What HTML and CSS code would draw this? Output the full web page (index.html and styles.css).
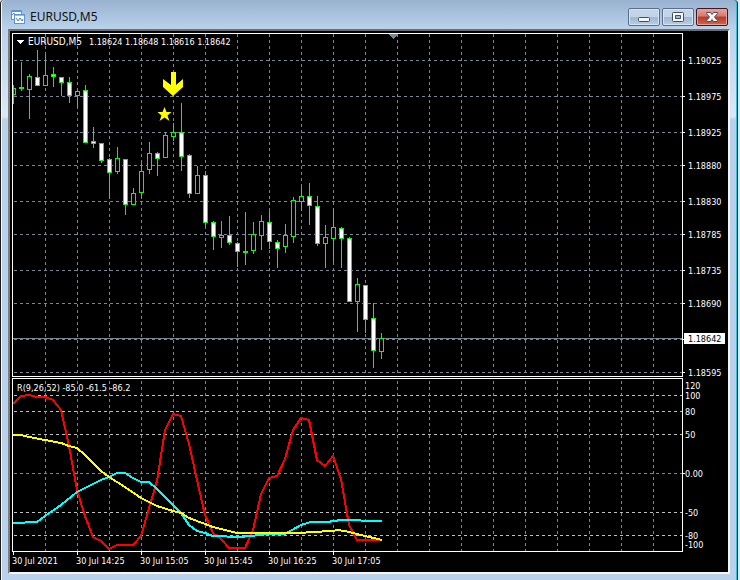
FILE: index.html
```html
<!DOCTYPE html>
<html lang="en">
<head>
<meta charset="utf-8">
<title>EURUSD,M5</title>
<link rel="stylesheet" href="styles.css">
</head>
<body>
<main class="window">
  <header class="titlebar">
    <svg class="app-icon" width="14" height="14" viewBox="0 0 14 14" aria-hidden="true">
      <path d="M.5 .5h10v9H.5z" fill="#fff" stroke="#5b92dc"/>
      <path d="M1 1h9v1H1z" fill="#5b92dc"/>
      <path d="M1 5l2-2 1 3" fill="none" stroke="#3f7fd6"/>
      <rect x="3.500" y="4.500" width="10" height="9" fill="#fff" stroke="#5b92dc"/>
      <path d="M4 5h9v1H4z" fill="#8db6ea"/>
      <path d="M5 8l2 3 2-3 2 3 1-2" fill="none" stroke="#3f7fd6"/>
    </svg>
    <h1 class="title">EURUSD,M5</h1>
    <div class="controls">
      <button class="control" type="button" aria-label="Minimize">
        <svg width="12" height="12" viewBox="0 0 12 12"><rect x=".5" y="6.500" width="11" height="4" rx="1" fill="#f6f6f6" stroke="#454c5c"/></svg>
      </button>
      <button class="control" type="button" aria-label="Maximize">
        <svg width="12" height="12" viewBox="0 0 12 12"><rect x=".5" y="1.500" width="11" height="9" rx="1" fill="#f6f6f6" stroke="#454c5c"/><path d="M3.500 4.500h5v3h-5z" fill="#9db9d8" stroke="#454c5c"/></svg>
      </button>
      <button class="control close" type="button" aria-label="Close">
        <svg width="12" height="12" viewBox="0 0 12 12"><path d="M.5 1.500h4L6 3.500l1.500-2h4v1L8.500 6l3 3.500v1h-4L6 8.500l-1.500 2h-4v-1l3-3.500-3-3.500z" fill="#f6f6f6" stroke="#454c5c"/></svg>
      </button>
    </div>
  </header>
  <section class="client">
    <svg class="chart" id="chart" role="img" aria-label="EURUSD five minute candles with R indicator"></svg>
  </section>
</main>
<script src="chart.js"></script>
</body>
</html>
```
FILE: styles.css
```css
* { box-sizing: border-box; }
body {
  margin: 0;
  padding-right: 2px;
  background: #e6e6e6;
  font-family: "Noto Sans", "Open Sans", sans-serif;
}
.window {
  min-height: 100vh;
  padding: 0 7px 6px 7px;
  border-left: 1px solid #1d1d1d;
  border-right: 1px solid #1d1d1d;
  border-radius: 4px 4px 0 0;
  background: linear-gradient(#98b2d0, #b9d1ea 28px, #dbe7f5 116px, #b9d1ea 120px);
  box-shadow: inset 1px 0 #f4f8fc, inset -1px 0 #27c4e8;
  display: flex;
  flex-direction: column;
}
.titlebar {
  display: flex;
  align-items: center;
  gap: 5px;
  height: 29px;
  padding: 5px 2px 0 3px;
}
.title {
  margin: 0;
  flex: 1;
  font-size: 12px;
  font-weight: 400;
  line-height: 16px;
  color: #111;
}
.controls { display: flex; gap: 2px; }
.control {
  display: grid;
  place-items: center;
  width: 32px;
  height: 18px;
  padding: 0;
  border: 1px solid #5b6f8b;
  border-radius: 2px;
  background: linear-gradient(#c3d4e7 48%, #9fb7d2 52%, #b9cee6);
  box-shadow: inset 0 0 0 1px #d6e3f1;
}
.control.close {
  border-color: #431422;
  background: linear-gradient(#e8a598, #d6786a 45%, #b8392a 50%, #cc6a4e);
  box-shadow: inset 0 0 0 1px #e0a59a;
}
.client {
  flex: 1;
  border: 2px solid;
  border-color: #6d6d6d #f4f4f4 #f4f4f4 #7d7d7d;
  background: #000;
}
.chart {
  display: block;
  width: 100%;
  height: 541px;
  shape-rendering: crispEdges;
}
.grid { stroke: #778899; stroke-dasharray: 3 3; }
.level { stroke: #c0c0c0; stroke-dasharray: 3 3; }
.frame { fill: none; stroke: #fff; }
.tick { stroke: #fff; }
.price-line { stroke: #778899; }
.wick { fill: #0f0; }
.body { stroke: #0f0; }
.up { fill: #000; }
.down { fill: #fff; }
.line { fill: none; stroke-width: 2; }
.red { stroke: #f00; }
.cyan { stroke: #0ff; }
.yellow { stroke: #ff0; }
.signal { fill: #ff0; shape-rendering: auto; }
.marker { fill: #778899; }
.white { fill: #fff; }
.label {
  fill: #fff;
  font-family: "DejaVu Sans Condensed", "DejaVu Sans", sans-serif;
  font-size: 9px;
}
.symbol { font-size: 10px; }
.current { fill: #000; }
```
FILE: chart.js
```js
const svg = document.getElementById('chart');

// Candle rows: high, body top, body bottom, low, direction (1 = up, 0 = down)
const candles = [
  [85,88,94,103,1],[62,87,88,90,1],[74,76,89,118,1],[50,77,85,85,0],[55,75,85,85,1],
  [67,74,76,86,0],[77,77,82,95,0],[77,82,95,102,0],[90,91,95,106,1],[85,90,142,142,0],
  [127,141,143,147,0],[143,143,160,162,0],[158,159,172,198,0],[147,158,171,173,1],
  [159,159,204,214,0],[188,193,204,204,1],[163,171,192,197,1],[142,153,169,173,1],
  [152,153,158,175,0],[132,135,157,157,1],[123,132,136,140,1],[103,132,156,170,0],
  [154,155,193,197,0],[166,175,193,193,1],[171,175,222,226,0],[221,222,236,249,0],
  [221,235,237,247,1],[216,235,242,244,0],[242,243,251,266,0],[212,251,252,264,1],
  [222,234,250,253,1],[215,221,235,249,1],[211,222,241,248,0],[240,242,248,267,0],
  [224,235,246,252,1],[197,200,236,242,1],[187,196,201,210,1],[183,196,205,224,0],
  [196,206,243,245,0],[225,237,243,267,1],[208,227,238,261,1],[227,228,238,267,0],
  [237,238,301,301,0],[278,284,301,331,1],[285,285,319,332,0],[303,318,350,367,0],
  [333,338,351,358,1]
];
const prices = [[60,'1.19025'],[96,'1.18975'],[132,'1.18925'],[165,'1.18880'],[201,'1.18830'],
  [234,'1.18785'],[270,'1.18735'],[303,'1.18690'],[339,''],[372,'1.18595']];
const levels = [[395,'100'],[411,'80'],[434,'50'],[473,'0.00'],[512,'-50'],[535,'-80']];
const times = ['30 Jul 2021','30 Jul 14:25','30 Jul 15:05','30 Jul 15:45','30 Jul 16:25','30 Jul 17:05'];
const lines = {
  red: '13,404 21,396 29,395 37,397 45,397 53,400 61,410 69,446 77,490 85,516 93,537 101,541 109,549 117,545 133,545 141,536 149,508 157,481 165,430 173,414 181,416 189,444 197,480 205,515 213,533 221,539 229,548 245,548 253,530 261,494 269,478 277,476 285,459 293,430 301,418 309,420 317,460 325,466 333,456 341,479 349,525 357,540 381,540',
  cyan: '13,523 37,522 45,516 61,505 77,492 93,484 101,480 109,477 117,473 125,473 133,478 141,482 149,482 157,489 173,505 181,513 189,525 197,531 205,533 213,536 240,537 260,535 269,534 285,534 301,525 311,522 327,522 341,520 357,520 365,521 382,521',
  yellow: '13,435 21,435 29,437 45,440 61,443 69,446 77,448 85,455 93,463 101,471 109,477 125,487 141,498 157,506 173,511 181,513 189,518 205,524 213,527 229,531 237,533 301,533 311,532 333,531 337,530 345,531 357,534 365,536 382,540'
};

function draw() {
  const width = svg.clientWidth;
  const left = 10, top = 31;
  const right = left + width - 46;
  const out = [];
  const seg = (c, x1, y1, x2, y2) =>
    out.push(`<path class="${c}" d="M${x1} ${y1}L${x2} ${y2}"/>`);
  const text = (x, y, s, c = '') => out.push(`<text class="label ${c}" x="${x}" y="${y}">${s}</text>`);

  for (const [y] of prices) seg('grid', 14, y + .5, right, y + .5);
  for (const [y, s] of levels) seg(s === '0.00' ? 'grid' : 'level', 14, y + .5, right, y + .5);
  for (let x = 45; x < right; x += 32) {
    seg('grid', x + .5, 34, x + .5, 376);
    seg('grid', x + .5, 381, x + .5, 551);
  }
  seg('price-line', 13, 338.5, right, 338.5);

  candles.forEach(([hi, a, b, lo, up], i) => {
    const x = 13 + 8 * i;
    out.push(`<rect class="wick" x="${x}" y="${hi}" width="1" height="${lo - hi + 1}"/>`);
    const l = i ? x - 2 : x;
    out.push(`<rect class="body ${up ? 'up' : 'down'}" x="${l + .5}" y="${a + .5}" width="${x + 2 - l}" height="${b - a}"/>`);
  });
  for (const name of ['red', 'cyan', 'yellow'])
    out.push(`<polyline class="line ${name}" points="${lines[name]}"/>`);

  out.push(`<rect class="frame" x="12.5" y="33.5" width="${right - 12}" height="343"/>`);
  out.push(`<rect class="frame" x="12.5" y="378.5" width="${right - 12}" height="173"/>`);
  out.push('<path class="signal" d="M171 72h5v13l7-6v8l-10 9-10-9v-8l8 6z"/>');
  out.push('<path class="signal" d="M164.500 107l2 5h5l-4 3.500 2 5.500-5-3.500-5 3.500 2-5.500-4-3.500h5z"/>');
  out.push('<path class="marker" d="M388 34h10l-5 5z"/>');
  out.push('<path class="white" d="M16 40h8l-4 4z"/>');
  text(28, 45, 'EURUSD,M5', 'symbol');
  text(89, 45, '1.18624 1.18648 1.18616 1.18642');
  text(17, 391, 'R(9,26,52) -85.0 -61.5 -86.2');

  for (const [y, s] of prices) {
    seg('tick', right + 1, y + .5, right + 3, y + .5);
    text(right + 6, y + 4, s);
  }
  for (const [y, s] of levels) {
    if (s === '0.00') seg('tick', right + 1, y + .5, right + 3, y + .5);
    text(right + 3, y + 4, s);
  }
  text(right + 3, 389, '120');
  text(right + 3, 548, '-100');
  out.push(`<rect class="white" x="${right + 2}" y="333" width="41" height="11"/>`);
  text(right + 6, 342, '1.18642', 'current');
  times.forEach((s, i) => {
    seg('tick', 13.5 + 64 * i, 552, 13.5 + 64 * i, 555);
    text(12 + 64 * i, 564, s);
  });

  svg.setAttribute('viewBox', `${left} ${top} ${width} 541`);
  svg.innerHTML = out.join('');
}
draw();
addEventListener('resize', draw);
```
